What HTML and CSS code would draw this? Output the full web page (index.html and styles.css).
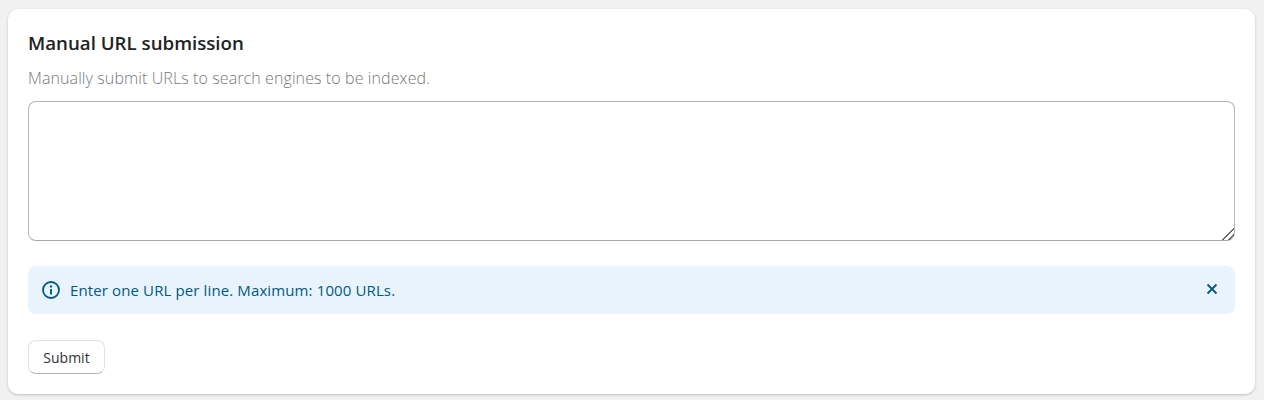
FILE: index.html
```html
<!DOCTYPE html>
<html lang="en">
<head>
    <meta charset="UTF-8">
    <title>Manual URL submission</title>
    <link rel="stylesheet" href="styles.css">
</head>
<body>
    <section class="card">
        <h2 class="card-title">Manual URL submission</h2>
        <p class="card-desc">Manually submit URLs to search engines to be indexed.</p>
        <textarea class="url-input"></textarea>
        <div class="notice">
            <svg class="notice-icon" width="18" height="18" viewBox="0 0 18 18" fill="none">
                <circle cx="9" cy="9" r="8" stroke="#005a83" stroke-width="1.8"/>
                <circle cx="9" cy="5.4" r="1.2" fill="#005a83"/>
                <path d="M9 8v5.4" stroke="#005a83" stroke-width="1.9"/>
            </svg>
            <span class="notice-text">Enter one URL per line. Maximum: 1000 URLs.</span>
            <svg class="notice-close" width="12" height="12" viewBox="0 0 12 12" fill="none">
                <path d="M1.5 1.5l9 9M10.5 1.5l-9 9" stroke="#005a83" stroke-width="1.8"/>
            </svg>
        </div>
        <button class="submit-btn" type="button">Submit</button>
    </section>
</body>
</html>
```

FILE: styles.css
```css
* {
    margin: 0;
    padding: 0;
    box-sizing: border-box;
}

body {
    font-family: 'Open Sans', 'Noto Sans', sans-serif;
    background-color: #f1f1f1;
    padding: 9px 9px 6px 8px;
    height: 400px;
    overflow: hidden;
}

.card {
    height: 385px;
    background-color: #fff;
    border-radius: 10px;
    box-shadow: 0 1px 3px rgba(0, 0, 0, 0.2);
    padding: 20px;
}

.card-title {
    font-size: 18.7px;
    line-height: 28px;
    font-weight: 600;
    color: #202223;
}

.card-desc {
    margin-top: 9px;
    font-size: 16px;
    line-height: 24px;
    font-weight: 300;
    letter-spacing: 0.1px;
    color: #75787c;
}

.url-input {
    display: block;
    width: 100%;
    height: 140px;
    margin-top: 11px;
    border: 1px solid #b4b6b8;
    border-bottom-color: #a5a7a9;
    border-radius: 8px;
    background-color: #fff;
}

.url-input::-webkit-resizer {
    background: linear-gradient(135deg, transparent 57%, #666 57%, #666 64%, transparent 64%, transparent 77%, #666 77%, #666 84%, transparent 84%);
}

.notice {
    display: flex;
    align-items: center;
    height: 48px;
    margin-top: 25px;
    padding: 0 17px 0 14px;
    background-color: #e8f3fc;
    border-radius: 8px;
}

.notice-text {
    flex: 1;
    margin-left: 10px;
    font-size: 15px;
    letter-spacing: 0.12px;
    color: #005a83;
}

.notice-close {
    margin-bottom: 2px;
}

.submit-btn {
    display: block;
    margin-top: 26px;
    width: 77px;
    height: 34px;
    font-family: inherit;
    font-size: 14px;
    color: #303335;
    background-color: #fff;
    border: 1px solid #dfe1e3;
    border-bottom-color: #b5b8bb;
    border-radius: 8px;
}
```
